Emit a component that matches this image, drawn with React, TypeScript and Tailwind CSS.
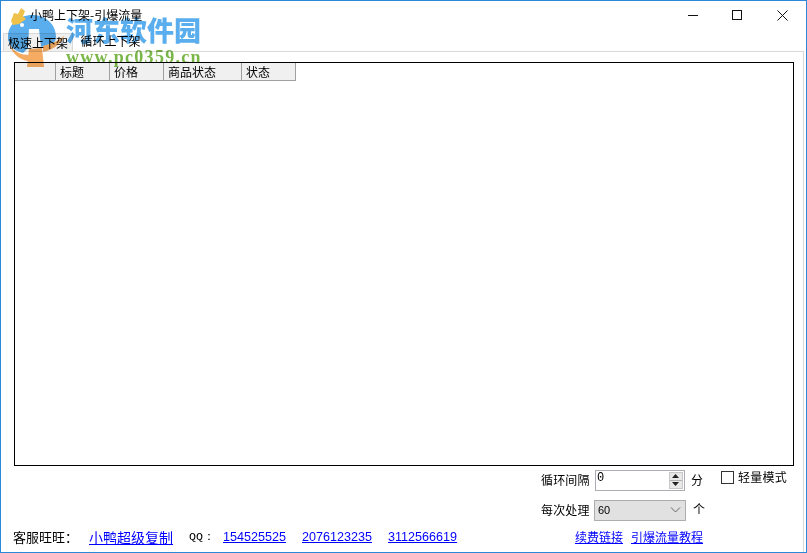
const CJK = "font-['Noto_Sans_CJK_SC','Liberation_Sans',sans-serif]";

const columns = [
  { label: '', width: 'w-[41px]' },
  { label: '标题', width: 'w-[54px]' },
  { label: '价格', width: 'w-[54px]' },
  { label: '商品状态', width: 'w-[78px]' },
  { label: '状态', width: 'w-[54px]' },
];

function TitleBar() {
  return (
    <div className="flex h-[30px] shrink-0 items-center">
      <div className="ml-[29px] -mt-[3px] text-[12px] leading-[16px] text-black">小鸭上下架-引爆流量</div>
      <div className="ml-auto flex h-full items-center pb-[2px]">
        <svg className="mr-[34px] h-[10px] w-[10px]" viewBox="0 0 10 10">
          <path d="M0 5.5 H10" stroke="#111" strokeWidth="1" />
        </svg>
        <svg className="mr-[35px] h-[10px] w-[10px]" viewBox="0 0 10 10">
          <rect x="0.5" y="0.5" width="9" height="9" fill="none" stroke="#111" strokeWidth="1" />
        </svg>
        <svg className="mr-[18px] h-[11px] w-[11px]" viewBox="0 0 11 11">
          <path d="M0.5 0.5 L10.5 10.5 M10.5 0.5 L0.5 10.5" stroke="#111" strokeWidth="1" />
        </svg>
      </div>
    </div>
  );
}

function Tabs() {
  return (
    <div className="flex h-[20px] shrink-0 items-end pl-[2px] text-[12px] leading-[16px]">
      <div className="flex h-[18px] w-[70px] items-center justify-center border border-b-0 border-[#d9d9d9] bg-[#f0f0f0] text-black">
        极速上下架
      </div>
      <div className="flex h-[20px] w-[75px] items-center justify-center bg-white text-black">循环上下架</div>
    </div>
  );
}

function ListHeader() {
  return (
    <div className="flex h-[18px] w-[281px] border-b border-[#a0a0a0] bg-[#f0f0f0] text-[12px] leading-[18px] text-black">
      {columns.map((col, i) => (
        <div key={i} className={`${col.width} h-full border-r border-[#a0a0a0] pl-[4px]`}>
          {col.label}
        </div>
      ))}
    </div>
  );
}

function Controls() {
  return (
    <div className="mr-[16px] mt-[3px] flex justify-end text-[12px] leading-[16px] text-black">
      <div className="flex flex-col gap-[8px]">
        <div className="flex h-[22px] items-center">
          <span className="w-[54px] tracking-[0.2px]">循环间隔</span>
          <div className="flex h-[21px] w-[90px] items-center justify-between border border-[#abadb3] bg-white font-['Liberation_Mono',monospace] text-[12px]">
            <span className="-mt-[4px] ml-[1px]">0</span>
            <div className="mr-[1px] flex h-[17px] w-[14px] flex-col border border-[#c8c8c8] bg-[#e8e8e8]">
              <div className="flex flex-1 items-center justify-center border-b border-[#b0b0b0]">
                <svg className="h-[4px] w-[7px]" viewBox="0 0 7 4"><path d="M3.5 0 L7 4 H0 Z" fill="#222" /></svg>
              </div>
              <div className="flex flex-1 items-center justify-center">
                <svg className="h-[4px] w-[7px]" viewBox="0 0 7 4"><path d="M0 0 H7 L3.5 4 Z" fill="#222" /></svg>
              </div>
            </div>
          </div>
          <span className="ml-[6px]">分</span>
        </div>
        <div className="flex h-[22px] items-center">
          <span className="w-[53px] tracking-[0.2px]">每次处理</span>
          <div className="flex h-[21px] w-[92px] items-center justify-between border border-[#adadad] bg-[#e1e1e1] pl-[3px] pr-[4px] font-['Liberation_Sans',sans-serif] text-[11px]">
            <span>60</span>
            <svg className="h-[6px] w-[11px]" viewBox="0 0 11 6">
              <path d="M1 0.5 L5.5 5 L10 0.5" fill="none" stroke="#666" strokeWidth="1" />
            </svg>
          </div>
          <span className="-mt-[2px] ml-[7px]">个</span>
        </div>
      </div>
      <div className="ml-[16px] flex h-[16px] items-center self-start">
        <div className="h-[13px] w-[13px] border border-[#333] bg-white" />
        <span className="ml-[4px] tracking-[0.25px]">轻量模式</span>
      </div>
    </div>
  );
}

function FooterLinks() {
  return (
    <div className="mt-[7px] flex h-[18px] items-center pl-[12px] text-[12px] leading-[16px]">
      <span className="w-[76px] text-[13px] text-black">客服旺旺：</span>
      <a className="w-[100px] text-[14px] text-[#0000ff] underline">小鸭超级复制</a>
      <span className="w-[34px] font-['Liberation_Mono',monospace] text-[11.67px] text-black">QQ：</span>
      <a className="w-[79px] font-['Liberation_Sans',sans-serif] text-[12.6px] text-[#0000ff] underline">154525525</a>
      <a className="w-[86px] font-['Liberation_Sans',sans-serif] text-[12.6px] text-[#0000ff] underline">2076123235</a>
      <a className="font-['Liberation_Sans',sans-serif] text-[12.6px] text-[#0000ff] underline">3112566619</a>
      <a className="ml-auto text-[#0000ff] underline">续费链接</a>
      <a className="ml-[8px] mr-[100px] text-[#0000ff] underline">引爆流量教程</a>
    </div>
  );
}

// app icon plus the download-site stamp that sits over the top-left corner
function Watermark() {
  return (
    <div className="pointer-events-none absolute left-0 top-0 mix-blend-multiply">
      <svg className="absolute left-0 top-0 h-[70px] w-[70px]" viewBox="0 0 70 70">
        <path d="M7 36 C7 22 20 13 33 14 C46 15 55 24 55 36 C55 39 54 41 52 42 L40 46 L38 28 L28 28 L27 47 L22 52 C13 50 7 44 7 36 Z" fill="#5aaeee" />
        <path d="M10 20 L13 12 L17 13 L20 7 L24 10 L22 15 L25 18 L18 23 L12 24 Z" fill="#eec24a" />
        <circle cx="21" cy="24" r="2" fill="#ffffff" />
        <path d="M28 48 L41 47 L43 66 L26 66 Z" fill="#f5ab62" />
        <path d="M42 45 C50 43 57 40 63 35 C60 43 52 49 42 51 Z" fill="#f5ab62" />
        <path d="M9 45 C14 51 20 54 28 54 L27 60 C19 59 12 53 9 45 Z" fill="#f5ab62" />
      </svg>
      <div className="absolute left-[65px] top-[9px] w-[150px]">
        <div className="whitespace-nowrap font-['Noto_Sans_CJK_SC',sans-serif] text-[27px] font-black leading-[40px] text-[#5aaeee]">
          河东软件园
        </div>
        <div className="mt-[-3px] whitespace-nowrap font-['Liberation_Serif',serif] text-[18px] font-bold leading-[20px] tracking-[1.3px] text-[#7ab648]">
          www.pc0359.cn
        </div>
      </div>
    </div>
  );
}

export default function App() {
  return (
    <div className={`relative flex h-[553px] w-[807px] flex-col overflow-hidden border border-[#2b88d8] bg-white ${CJK}`}>
      <TitleBar />
      <Tabs />
      <div className="mr-[2px] flex flex-1 flex-col border-r border-t border-[#d9d9d9]">
        <div className="ml-[13px] mr-[9px] mt-[10px] h-[404px] border border-black bg-white">
          <ListHeader />
        </div>
        <Controls />
        <FooterLinks />
      </div>
      <Watermark />
    </div>
  );
}
